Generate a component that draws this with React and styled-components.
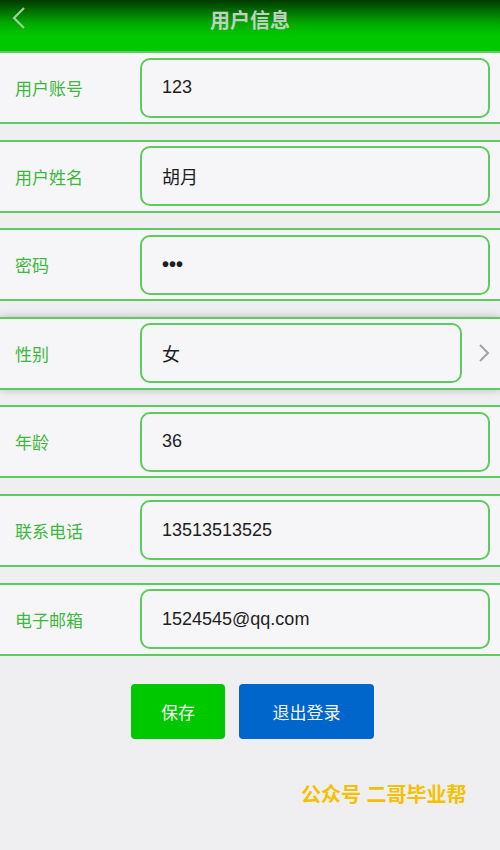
import React from 'react'
import styled, { createGlobalStyle } from 'styled-components'

const fields = [
  { label: '用户账号', value: '123' },
  { label: '用户姓名', value: '胡月' },
  { label: '密码', value: '•••', password: true },
  { label: '性别', value: '女', select: true },
  { label: '年龄', value: '36' },
  { label: '联系电话', value: '13513513525' },
  { label: '电子邮箱', value: '1524545@qq.com' },
]

export default function App() {
  return (
    <>
      <Global />
      <Page>
        <Header>
          <Back>
            <svg width="16" height="24" viewBox="0 0 16 24">
              <path d="M13 2 L3 12 L13 22" fill="none" stroke="#9ad39a" strokeWidth="2.2" />
            </svg>
          </Back>
          <Title>用户信息</Title>
        </Header>
        <Form>
          {fields.map(f => (
            <Row key={f.label} $raised={f.select}>
              <Label>{f.label}</Label>
              <Input $select={f.select} $password={f.password}>{f.value}</Input>
              {f.select && (
                <Arrow>
                  <svg width="12" height="20" viewBox="0 0 12 20">
                    <path d="M2 2 L10 10 L2 18" fill="none" stroke="#a0a0a8" strokeWidth="2" />
                  </svg>
                </Arrow>
              )}
            </Row>
          ))}
        </Form>
        <Buttons>
          <Button $bg="#00c800" $w="94px">保存</Button>
          <Button $bg="#0066cc" $w="135px">退出登录</Button>
        </Buttons>
        <Mark>公众号 二哥毕业帮</Mark>
      </Page>
    </>
  )
}

const Global = createGlobalStyle`
  body {
    margin: 0;
    background: #efeff1;
    font-family: "Liberation Sans", "Noto Sans CJK SC", sans-serif;
  }
`
const Page = styled.div`
  width: 500px;
  height: 850px;
  background: #efeff1;
  overflow: hidden;
`
const Header = styled.div`
  height: 51px;
  position: relative;
  display: flex;
  justify-content: center;
  background: linear-gradient(to bottom, #003800 0%, #00a800 45%, #00c800 70%, #00c800 100%);
`
const Back = styled.div`
  position: absolute;
  left: 11px;
  top: 6px;
`
const Title = styled.div`
  margin-top: 5px;
  font-size: 20px;
  font-weight: bold;
  color: #c4cfc4;
`
const Form = styled.div`
  display: flex;
  flex-direction: column;
  gap: 15.6px;
`
const Row = styled.div`
  height: 73px;
  box-sizing: border-box;
  display: flex;
  align-items: center;
  background: #f6f5f8;
  border-top: 2px solid #5ecb5e;
  border-bottom: 2px solid #5ecb5e;
  padding: 0 10px 0 15px;
  box-shadow: ${p => (p.$raised ? '0 0 8px rgba(0,0,0,0.22)' : 'none')};
  position: relative;
`
const Label = styled.div`
  width: 125px;
  font-size: 17px;
  color: #3cb83c;
`
const Input = styled.div`
  height: 60px;
  box-sizing: border-box;
  width: ${p => (p.$select ? '322px' : '350px')};
  border: 2px solid #5ecb5e;
  border-radius: 10px;
  display: flex;
  align-items: center;
  padding-left: 20px;
  font-size: ${p => (p.$password ? '20px' : '18px')};
  font-weight: ${p => (p.$password ? 'bold' : 'normal')};
  color: #1e1e24;
`
const Arrow = styled.div`
  margin-left: 16px;
  display: flex;
`
const Buttons = styled.div`
  display: flex;
  justify-content: center;
  gap: 14px;
  margin-top: 28px;
  padding-left: 5px;
`
const Button = styled.div`
  width: ${p => p.$w};
  height: 55px;
  border-radius: 4px;
  background: ${p => p.$bg};
  color: #f2f2f2;
  font-size: 17px;
  display: flex;
  align-items: center;
  justify-content: center;
`
const Mark = styled.div`
  margin-top: 40px;
  padding-left: 301px;
  font-size: 20px;
  font-weight: bold;
  color: #f5c000;
`
